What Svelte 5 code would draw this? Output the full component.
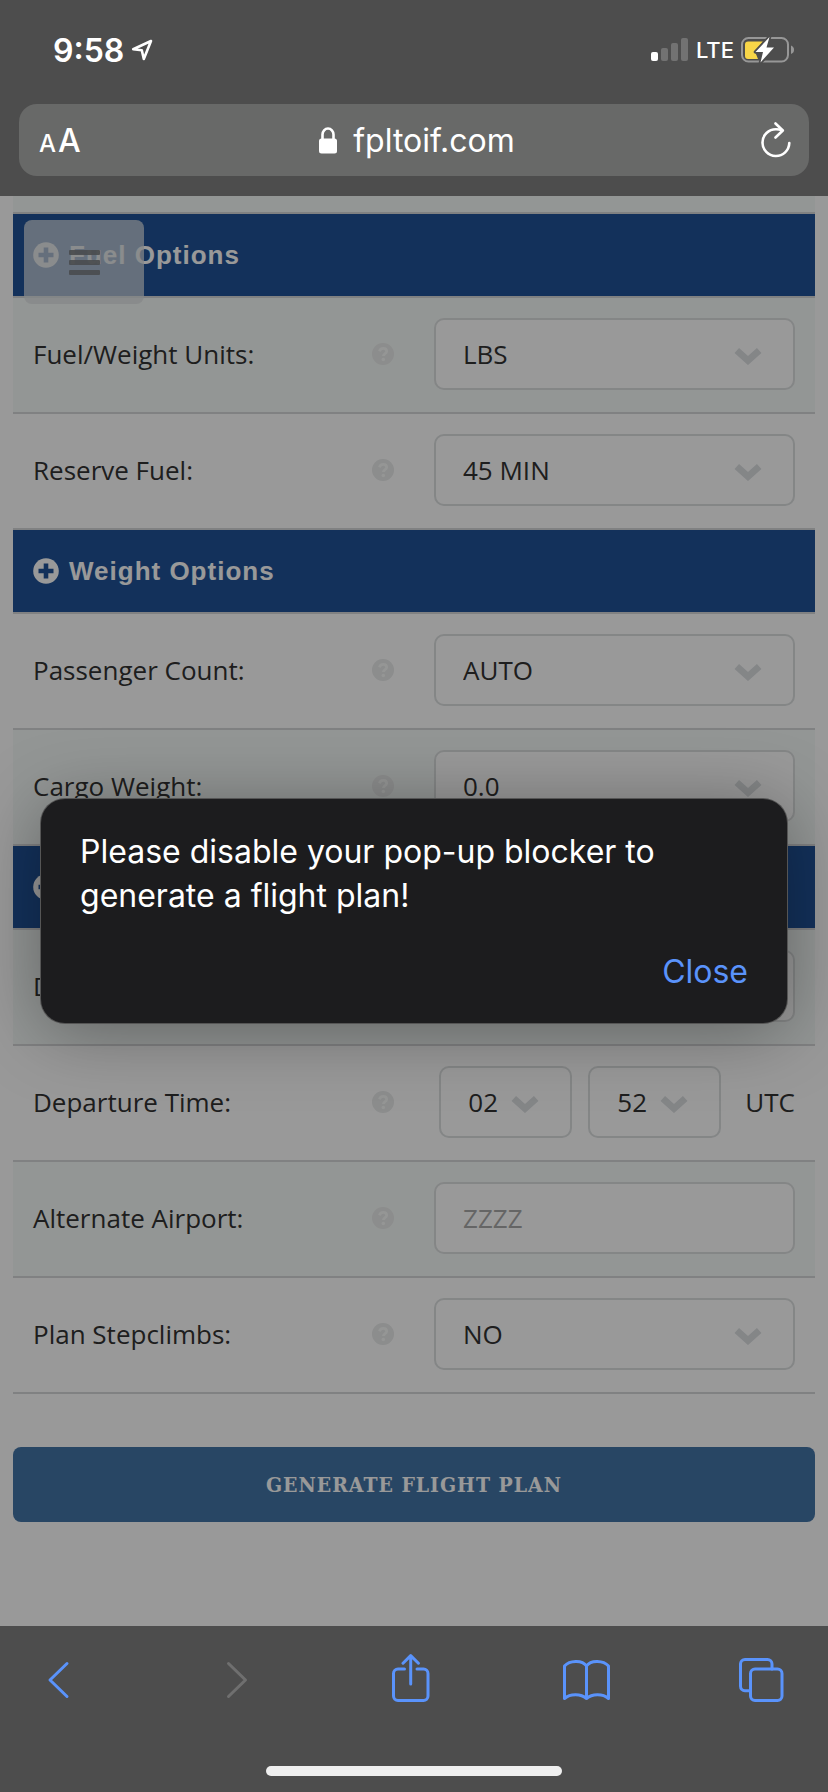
<script>
	let open = true;

	const sections = [
		{
			title: "Fuel Options",
			rows: [
				{ id: "units", label: "Fuel/Weight Units:", options: ["LBS", "KGS"], tint: true },
				{ id: "reserve", label: "Reserve Fuel:", options: ["45 MIN", "30 MIN"] },
			],
		},
		{
			title: "Weight Options",
			rows: [
				{ id: "pax", label: "Passenger Count:", options: ["AUTO"] },
				{ id: "cargo", label: "Cargo Weight:", options: ["0.0"], tint: true },
			],
		},
		{
			title: "Other Options",
			rows: [
				{ id: "date", label: "Departure Date:", options: [""], tint: true },
				{ id: "time", label: "Departure Time:", type: "time" },
				{ id: "alternate", label: "Alternate Airport:", type: "text", tint: true },
				{ id: "stepclimbs", label: "Plan Stepclimbs:", options: ["NO", "YES"] },
			],
		},
	];
</script>

{#snippet dropdown(id, options, name)}
	<div class="select">
		<select {id} aria-label={name}>
			{#each options as option}
				<option>{option}</option>
			{/each}
		</select>
		<svg width="28" height="18" viewBox="0 0 28 18" aria-hidden="true">
			<path d="M2.800 3.500 14 13.500 25.200 3.500" fill="none" stroke="#dcdfe2" stroke-width="6.800" />
		</svg>
	</div>
{/snippet}

<div class="phone">
	<header class="chrome">
		<div class="status">
			<div class="clock">
				<span>9:58</span>
				<svg width="22" height="22" viewBox="0 0 22 22" aria-hidden="true">
					<path d="M20 2 2.2 10.2 10.8 11.2 12.8 20Z" fill="none" stroke="#fff" stroke-width="2.6" stroke-linejoin="round" />
				</svg>
			</div>
			<div class="signal">
				<svg width="38" height="24" viewBox="0 0 38 24" aria-hidden="true">
					<rect x="0" y="14" width="7" height="9" rx="2" fill="#fff" />
					<rect x="10" y="10" width="7" height="13" rx="2" fill="#727272" />
					<rect x="20" y="5" width="7" height="18" rx="2" fill="#727272" />
					<rect x="30" y="0" width="7" height="23" rx="2" fill="#727272" />
				</svg>
				<span>LTE</span>
				<svg width="54" height="28" viewBox="0 0 54 28" aria-hidden="true">
					<rect x="1" y="2" width="46" height="23.5" rx="6.5" fill="none" stroke="#979797" stroke-width="2" />
					<path d="M7 5.5H22L14 15.5 17 23H7a3 3 0 0 1-3-3V8.500a3 3 0 0 1 3-3Z" fill="#f8d648" />
					<path d="M50 9.500c2 .8 3 2.200 3 4.300s-1 3.500-3 4.300Z" fill="#979797" />
					<path d="M28.500 1 14.500 16H22L19.500 26.500 33 11.500H25.500Z" fill="#fff" stroke="#4d4d4d" stroke-width="3.500" paint-order="stroke" stroke-linejoin="round" />
				</svg>
			</div>
		</div>
		<div class="address">
			<button class="plain text-size" aria-label="Text size"><small>A</small>A</button>
			<div class="site">
				<svg width="18" height="27" viewBox="0 0 18 27" aria-hidden="true">
					<path d="M3.500 13V7.500a5.500 6 0 0 1 11 0V13" fill="none" stroke="#fff" stroke-width="2.600" />
					<rect x="0" y="11.500" width="18" height="15" rx="2.500" fill="#fff" />
				</svg>
				<span>fpltoif.com</span>
			</div>
			<button class="plain reload" aria-label="Reload">
				<svg width="30" height="36" viewBox="0 0 30 36" aria-hidden="true">
					<g fill="none" stroke="#fff" stroke-width="2.600" stroke-linecap="round" stroke-linejoin="round">
						<path d="M28.300 21A13.400 13.400 0 1 1 15 7.200q3.500 0 6 1" />
						<path d="M14.500 1.500 21.800 8.500 14.500 15.500" />
					</g>
				</svg>
			</button>
		</div>
	</header>

	<main class="page">
		<button class="menu" aria-label="Menu"><i></i><i></i><i></i></button>

		<form on:submit|preventDefault>
			<div class="previous"></div>
			{#each sections as section}
				<h2>
					<svg width="26" height="26" viewBox="0 0 26 26" aria-hidden="true">
						<circle cx="13" cy="13" r="12.800" fill="#fff" />
						<path d="M13 5.500V20.500M5.500 13H20.500" stroke="#205398" stroke-width="4.600" />
					</svg>
					{section.title}
				</h2>
				{#each section.rows as row}
					<div class="row" class:tint={row.tint}>
						<div class="cell name">
							<label for={row.id}>{row.label}</label>
							<svg width="22" height="22" viewBox="0 0 22 22" aria-hidden="true">
								<circle cx="11" cy="11" r="11" fill="#e9ebeb" />
								<path d="M7.500 8.300C8 6.300 9.300 5.300 11.200 5.300c2 0 3.500 1.200 3.500 2.900 0 2.500-3.300 2.500-3.300 4.800" fill="none" stroke="#f8faf9" stroke-width="2.800" />
								<circle cx="11.300" cy="16.500" r="1.800" fill="#f8faf9" />
							</svg>
						</div>
						<div class="cell field">
							{#if row.type === "time"}
								{@render dropdown(row.id, ["02"], "Departure hour")}
								{@render dropdown("minute", ["52"], "Departure minute")}
								<span class="zone">UTC</span>
							{:else if row.type === "text"}
								<input id={row.id} type="text" placeholder="ZZZZ" />
							{:else}
								{@render dropdown(row.id, row.options, row.label)}
							{/if}
						</div>
					</div>
				{/each}
			{/each}
			<button class="generate" type="submit">GENERATE FLIGHT PLAN</button>
		</form>

		{#if open}
			<div class="shade">
				<div class="dialog" role="alertdialog" aria-modal="true" aria-describedby="message">
					<p id="message">Please disable your pop-up blocker to generate a flight plan!</p>
					<button class="plain close" on:click={() => (open = false)}>Close</button>
				</div>
			</div>
		{/if}
	</main>

	<footer>
		<nav>
			<button class="plain" aria-label="Back">
				<svg width="48" height="48" viewBox="0 0 48 48"><path d="M33 9.500 16 26 33 42.500" /></svg>
			</button>
			<button class="plain off" aria-label="Forward" disabled>
				<svg width="48" height="48" viewBox="0 0 48 48"><path d="M18.500 9.500 35.500 26 18.500 42.500" /></svg>
			</button>
			<button class="plain" aria-label="Share">
				<svg width="48" height="48" viewBox="0 0 48 48">
					<path d="M18.500 15H12a4.500 4.500 0 0 0-4.500 4.500V42a4.500 4.500 0 0 0 4.500 4.500H37.500A4.500 4.500 0 0 0 42 42V19.500A4.500 4.500 0 0 0 37.500 15H31" />
					<path d="M24.700 30V2M17 9.200 24.700 1.600 32.400 9.200" />
				</svg>
			</button>
			<button class="plain" aria-label="Bookmarks">
				<svg width="48" height="48" viewBox="0 0 48 48">
					<path d="M24.500 44.500C19 39.800 8.500 39.300 2.500 44.500V12C7.500 6.500 20 5.500 24.500 12 29 5.500 41.500 6.500 46.500 12V44.500C40.500 39.300 30 39.800 24.500 44.500ZM24.500 12V44.500" />
				</svg>
			</button>
			<button class="plain" aria-label="Tabs">
				<svg width="48" height="48" viewBox="0 0 48 48">
					<rect x="12.500" y="15" width="31.500" height="31.500" rx="4.500" />
					<path d="M12 36.800H7A4.500 4.500 0 0 1 2.500 32.300V10A4.500 4.500 0 0 1 7 5.500H29.500A4.500 4.500 0 0 1 34 10V15" />
				</svg>
			</button>
		</nav>
		<div class="home"></div>
	</footer>
</div>

<style>
	:global(body) { margin: 0; }
	* { box-sizing: border-box; }

	.phone {
		display: flex;
		flex-direction: column;
		min-height: 100vh;
		background: #fff;
		font-family: "Open Sans", sans-serif;
		font-size: 26px;
		color: #333;
	}
	svg {
		display: block;
		flex: none;
	}
	.plain {
		padding: 0;
		border: 0;
		background: none;
		color: inherit;
		font: inherit;
		cursor: pointer;
	}

	/* browser bars */
	.chrome {
		padding: 0 19px 20px;
		background: #4d4d4d;
		color: #fff;
		font-family: Inter, sans-serif;
	}
	.status {
		display: flex;
		justify-content: space-between;
		height: 104px;
		padding: 0 14px 4px 34px;
	}
	.clock, .signal {
		display: flex;
		align-items: center;
		gap: 7px;
	}
	.clock {
		font-size: 32px;
		font-weight: 600;
	}
	.signal {
		font-size: 22px;
		font-weight: 500;
	}
	.address {
		display: grid;
		grid-template-columns: 1fr auto 1fr;
		align-items: center;
		height: 72px;
		padding: 0 18px 0 20px;
		border-radius: 18px;
		background: #686968;
		font-size: 32px;
	}
	.text-size {
		justify-self: start;
		font-weight: 500;
	}
	.text-size small {
		margin-right: 2px;
		font-size: 24px;
	}
	.site {
		display: flex;
		align-items: center;
		gap: 16px;
		padding-left: 4px;
	}
	.reload { justify-self: end; }

	/* web page */
	.page {
		position: relative;
		flex: 1;
		padding: 0 13px 64px;
	}
	.menu {
		position: absolute;
		top: 24px;
		left: 24px;
		display: flex;
		flex-direction: column;
		align-items: center;
		justify-content: center;
		gap: 5px;
		width: 120px;
		height: 84px;
		padding: 0;
		border: 0;
		border-radius: 8px;
		background: rgba(221, 225, 227, 0.73);
	}
	.menu i {
		width: 31px;
		height: 5px;
		border-radius: 1px;
		background: rgba(122, 126, 131, 0.9);
	}
	.previous {
		height: 18px;
		border-bottom: 2px solid #d5d8d9;
		background: #f6faf8;
	}
	h2 {
		display: flex;
		align-items: center;
		gap: 10px;
		height: 84px;
		margin: 0;
		padding: 0 20px;
		border-bottom: 2px solid #d5d8d9;
		background: #205398;
		color: #fff;
		font: bold 26px "Liberation Sans", sans-serif;
		letter-spacing: 1px;
	}
	.row {
		display: grid;
		grid-template-columns: 1fr 1fr;
		border-bottom: 2px solid #d5d8d9;
	}
	.row.tint { background: #f6faf8; }
	.cell {
		display: flex;
		align-items: center;
		padding: 20px 20px 22px;
	}
	.name { justify-content: space-between; }
	.field {
		justify-content: flex-end;
		gap: 16px;
	}
	.select {
		position: relative;
		flex: 1;
	}
	.select svg {
		position: absolute;
		top: 29px;
		right: 33px;
		pointer-events: none;
	}
	select, input {
		display: block;
		width: 100%;
		height: 72px;
		padding: 0 27px;
		border: 2px solid #dcdfe0;
		border-radius: 10px;
		background: #fff;
		color: #333;
		font: inherit;
		appearance: none;
	}
	input::placeholder { color: #a9a9a9; }
	.field:has(.zone) .select {
		flex: none;
		width: 133px;
	}
	.zone { margin-left: 8px; }
	.generate {
		display: block;
		width: 100%;
		height: 75px;
		margin-top: 53px;
		border: 0;
		border-radius: 8px;
		background: #4475a7;
		color: #fff;
		font: bold 21px "DejaVu Serif Condensed", "DejaVu Serif", serif;
		letter-spacing: 1px;
	}

	/* alert */
	.shade {
		position: absolute;
		inset: 0;
		display: flex;
		align-items: center;
		padding: 0 41px;
		background: rgba(0, 0, 0, 0.4);
	}
	.dialog {
		display: flex;
		flex-direction: column;
		gap: 32px;
		width: 100%;
		padding: 31px 39px 29px;
		border-radius: 24px;
		background: #1c1c1e;
		box-shadow: 0 0 0 1px #555, 0 8px 72px rgba(0, 0, 0, 0.35);
		color: #fff;
		font: 32px/44px Inter, sans-serif;
	}
	.dialog p { margin: 0; }
	.close {
		align-self: flex-end;
		color: #5a93fb;
	}

	footer {
		display: flex;
		flex-direction: column;
		justify-content: space-between;
		height: 166px;
		padding: 28px 0 16px;
		background: #4d4d4d;
	}
	nav {
		display: flex;
		justify-content: space-between;
		padding: 0 42px 0 34px;
	}
	nav svg {
		fill: none;
		stroke: #5a93fb;
		stroke-width: 3;
		stroke-linecap: round;
		stroke-linejoin: round;
	}
	nav .off svg { stroke: #6f6f6f; }
	.home {
		align-self: center;
		width: 296px;
		height: 10px;
		border-radius: 5px;
		background: #efefef;
	}
</style>
